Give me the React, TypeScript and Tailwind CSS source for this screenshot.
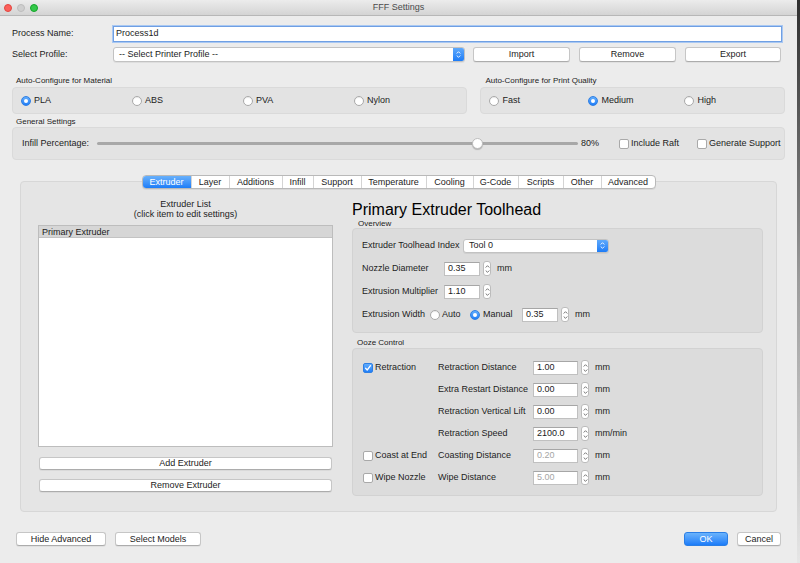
import React from "react";

const Radio = ({ checked }: { checked?: boolean }) =>
  checked ? (
    <span className="flex h-[10px] w-[10px] shrink-0 items-center justify-center rounded-full border border-[#2f7fe3] bg-linear-to-b from-[#62adfc] to-[#1e7ef8]">
      <span className="h-[4px] w-[4px] rounded-full bg-white" />
    </span>
  ) : (
    <span className="h-[10px] w-[10px] shrink-0 rounded-full border border-[#a9a9a9] bg-white shadow-[inset_0_1px_1px_rgba(0,0,0,0.08)]" />
  );

const Check = ({ checked }: { checked?: boolean }) =>
  checked ? (
    <span className="flex h-[10px] w-[10px] shrink-0 items-center justify-center rounded-[2px] border border-[#2f7fe3] bg-linear-to-b from-[#62adfc] to-[#1e7ef8]">
      <svg width="8" height="8" viewBox="0 0 8 8">
        <path d="M1.6 4.3 L3.2 6 L6.5 1.7" stroke="white" strokeWidth="1.3" fill="none" strokeLinecap="round" strokeLinejoin="round" />
      </svg>
    </span>
  ) : (
    <span className="h-[10px] w-[10px] shrink-0 rounded-[2px] border border-[#a9a9a9] bg-white" />
  );

const Chevrons = ({ color, size = 4 }: { color: string; size?: number }) => (
  <>
    <svg width={size + 1} height="3" viewBox="0 0 5 3">
      <path d="M0.7 2.5 L2.5 0.7 L4.3 2.5" stroke={color} strokeWidth="0.9" fill="none" />
    </svg>
    <svg width={size + 1} height="3" viewBox="0 0 5 3">
      <path d="M0.7 0.5 L2.5 2.3 L4.3 0.5" stroke={color} strokeWidth="0.9" fill="none" />
    </svg>
  </>
);

const Stepper = ({ className = "" }: { className?: string }) => (
  <span className={`flex h-[15px] w-[8px] shrink-0 flex-col items-center justify-center gap-[2px] rounded-[3px] border border-[#bcbcbc] bg-white ${className}`}>
    <Chevrons color="#666" />
  </span>
);

const Select = ({ label, className = "" }: { label: string; className?: string }) => (
  <div className={`flex items-center overflow-hidden rounded-[3px] border border-[#c2c2c2] bg-white shadow-[0_1px_0_rgba(0,0,0,0.06)] ${className}`}>
    <span className="flex-1 pl-[5px]">{label}</span>
    <span className="flex h-full w-[11px] flex-col items-center justify-center gap-[1px] bg-linear-to-b from-[#5ea9fb] to-[#1c7cf7]">
      <Chevrons color="white" />
    </span>
  </div>
);

const Button = ({ label, className = "" }: { label: string; className?: string }) => (
  <div className={`flex shrink-0 items-center justify-center rounded-[3px] border border-[#c6c6c6] border-b-[#acacac] bg-white leading-none shadow-[0_1px_0_rgba(0,0,0,0.05)] ${className}`}>
    {label}
  </div>
);

const Field = ({ value, className = "", disabled }: { value: string; className?: string; disabled?: boolean }) => (
  <div className={`flex h-[14px] shrink-0 items-center border border-[#c0c0c0] border-t-[#a6a6a6] bg-white pl-[3px] ${disabled ? "text-[#a5a5a5]" : ""} ${className}`}>
    {value}
  </div>
);

const tabs: [string, string][] = [
  ["Extruder", "w-[48px]"],
  ["Layer", "w-[38px]"],
  ["Additions", "w-[53px]"],
  ["Infill", "w-[31px]"],
  ["Support", "w-[48px]"],
  ["Temperature", "w-[65px]"],
  ["Cooling", "w-[47px]"],
  ["G-Code", "w-[45px]"],
  ["Scripts", "w-[45px]"],
  ["Other", "w-[38px]"],
  ["Advanced", "w-[54px]"],
];

const ooze: { check?: [string, boolean]; label: string; value: string; unit: string; disabled?: boolean }[] = [
  { check: ["Retraction", true], label: "Retraction Distance", value: "1.00", unit: "mm" },
  { label: "Extra Restart Distance", value: "0.00", unit: "mm" },
  { label: "Retraction Vertical Lift", value: "0.00", unit: "mm" },
  { label: "Retraction Speed", value: "2100.0", unit: "mm/min" },
  { check: ["Coast at End", false], label: "Coasting Distance", value: "0.20", unit: "mm", disabled: true },
  { check: ["Wipe Nozzle", false], label: "Wipe Distance", value: "5.00", unit: "mm", disabled: true },
];

export default function App() {
  return (
    <div className="flex h-[563px] w-[800px] overflow-hidden bg-[#ececec] font-['Liberation_Sans',Arial,sans-serif] text-[9px] text-[#1c1c1c]">
      <div className="flex w-[797px] shrink-0 flex-col">
        {/* title bar */}
        <div className="grid h-[16px] shrink-0 grid-cols-[1fr_auto_1fr] items-center border-b border-[#b7b7b7] bg-linear-to-b from-[#ececec] to-[#d4d4d4]">
          <div className="flex gap-[5px] pl-[4px]">
            <span className="h-[8px] w-[8px] rounded-full border border-[#e2463f] bg-[#fc605b]" />
            <span className="h-[8px] w-[8px] rounded-full border border-[#bdbdbd] bg-[#cfcfcf]" />
            <span className="h-[8px] w-[8px] rounded-full border border-[#14a42a] bg-[#34c84a]" />
          </div>
          <span className="text-[#4b4b4b]">FFF Settings</span>
          <span />
        </div>

        {/* process name */}
        <div className="mt-[10px] flex h-[16px] items-center px-[12px]">
          <span className="w-[101px]">Process Name:</span>
          <div className="flex h-[16px] w-[669px] items-center border border-[#6f9fe3] bg-white pl-[2px] shadow-[0_0_0_1px_#a9c8f2]">
            Process1d
          </div>
        </div>

        {/* profile */}
        <div className="mt-[5px] flex h-[15px] items-center px-[12px]">
          <span className="w-[101px]">Select Profile:</span>
          <Select label="-- Select Printer Profile --" className="h-[15px] w-[352px]" />
          <Button label="Import" className="ml-[8px] h-[15px] w-[97px]" />
          <Button label="Remove" className="ml-[9px] h-[15px] w-[97px]" />
          <Button label="Export" className="ml-[9px] h-[15px] w-[96px]" />
        </div>

        {/* auto configure */}
        <div className="mt-[13px] flex gap-[13px] px-[12px]">
          <div className="flex w-[456px] flex-col">
            <div className="h-[12px] pl-[4px] text-[8px] leading-[12px]">Auto-Configure for Material</div>
            <div className="flex h-[27px] items-center rounded-[4px] border border-[#dadada] bg-[#e3e3e3] pl-[8px]">
              {["PLA", "ABS", "PVA", "Nylon"].map((m, i) => (
                <div key={m} className="flex w-[111px] items-center gap-[3px]">
                  <Radio checked={i === 0} />
                  <span>{m}</span>
                </div>
              ))}
            </div>
          </div>
          <div className="flex w-[305px] flex-col">
            <div className="h-[12px] pl-[5px] text-[8px] leading-[12px]">Auto-Configure for Print Quality</div>
            <div className="flex h-[27px] items-center rounded-[4px] border border-[#dadada] bg-[#e3e3e3] pl-[8px]">
              <div className="flex w-[99px] items-center gap-[3px]">
                <Radio />
                <span>Fast</span>
              </div>
              <div className="flex w-[96px] items-center gap-[3px]">
                <Radio checked />
                <span>Medium</span>
              </div>
              <div className="flex items-center gap-[3px]">
                <Radio />
                <span>High</span>
              </div>
            </div>
          </div>
        </div>

        {/* general */}
        <div className="mt-[3px] px-[12px]">
          <div className="h-[10px] pl-[4px] text-[8px] leading-[10px]">General Settings</div>
          <div className="flex h-[33px] items-center rounded-[4px] border border-[#dadada] bg-[#e3e3e3] pl-[9px]">
            <span className="w-[75px]">Infill Percentage:</span>
            <div className="relative flex h-[12px] w-[481px] items-center">
              <div className="h-[3px] w-full rounded-full bg-[#a8a8a8]" />
              <span className="absolute left-[375px] top-[0.5px] h-[11px] w-[11px] rounded-full border border-[#bdbdbd] bg-white shadow-[0_1px_1px_rgba(0,0,0,0.2)]" />
            </div>
            <span className="ml-[3px] w-[38px]">80%</span>
            <div className="flex w-[78px] items-center gap-[2px]">
              <Check />
              <span>Include Raft</span>
            </div>
            <div className="flex items-center gap-[2px]">
              <Check />
              <span>Generate Support</span>
            </div>
          </div>
        </div>

        {/* tab view */}
        <div className="mt-[15px] flex flex-col px-[20px]">
          <div className="relative z-10 mb-[-8px] flex h-[14px] justify-center">
            <div className="flex overflow-hidden rounded-[4px] border border-[#b9b9b9] bg-white shadow-[0_1px_0_rgba(0,0,0,0.06)]">
              {tabs.map(([t, w], i) => (
                <div
                  key={t}
                  className={`flex items-center justify-center leading-none ${w} ${
                    i === 0
                      ? "bg-linear-to-b from-[#67b0fb] to-[#1b7df8] text-white"
                      : "border-l border-[#d4d4d4]"
                  }`}
                >
                  {t}
                </div>
              ))}
            </div>
          </div>
          <div className="flex h-[331px] gap-[19px] rounded-[4px] border border-[#d7d7d7] bg-[#e5e5e5] pl-[17px]">
            {/* extruder list */}
            <div className="flex w-[295px] flex-col pt-[17px]">
              <div className="text-center leading-[10px]">
                Extruder List
                <br />
                (click item to edit settings)
              </div>
              <div className="mt-[6px] h-[222px] border border-[#bdbdbd] bg-white">
                <div className="h-[12px] border-b border-[#c3c3c3] bg-[#d6d6d6] pl-[3px] leading-[12px]">Primary Extruder</div>
              </div>
              <Button label="Add Extruder" className="mx-[1px] mt-[10px] h-[13px]" />
              <Button label="Remove Extruder" className="mx-[1px] mt-[9px] h-[13px]" />
            </div>

            {/* extruder settings */}
            <div className="flex w-[411px] flex-col pt-[19px]">
              <div className="h-[18px] text-[16px] leading-[18px] text-black">Primary Extruder Toolhead</div>
              <div className="h-[9px] pl-[6px] text-[8px] leading-[9px]">Overview</div>
              <div className="flex h-[105px] flex-col gap-[8px] rounded-[4px] border border-[#d2d2d2] bg-[#dcdcdc] pl-[9px] pt-[9px]">
                <div className="flex h-[15px] items-center">
                  <span className="w-[101px]">Extruder Toolhead Index</span>
                  <Select label="Tool 0" className="h-[14px] w-[146px]" />
                </div>
                <div className="flex h-[15px] items-center">
                  <span className="w-[82px]">Nozzle Diameter</span>
                  <Field value="0.35" className="w-[36px]" />
                  <Stepper className="ml-[3px]" />
                  <span className="ml-[6px]">mm</span>
                </div>
                <div className="flex h-[15px] items-center">
                  <span className="w-[82px]">Extrusion Multiplier</span>
                  <Field value="1.10" className="w-[36px]" />
                  <Stepper className="ml-[3px]" />
                </div>
                <div className="flex h-[15px] items-center">
                  <span className="w-[68px]">Extrusion Width</span>
                  <div className="flex w-[40px] items-center gap-[2px]">
                    <Radio />
                    <span>Auto</span>
                  </div>
                  <div className="flex w-[52px] items-center gap-[3px]">
                    <Radio checked />
                    <span>Manual</span>
                  </div>
                  <Field value="0.35" className="w-[36px]" />
                  <Stepper className="ml-[3px]" />
                  <span className="ml-[6px]">mm</span>
                </div>
              </div>

              <div className="mt-[5px] h-[10px] pl-[5px] text-[8px] leading-[10px]">Ooze Control</div>
              <div className="flex h-[148px] flex-col gap-[7px] rounded-[4px] border border-[#d2d2d2] bg-[#dcdcdc] pl-[10px] pt-[11px]">
                {ooze.map((r) => (
                  <div key={r.label} className="flex h-[15px] items-center">
                    <div className="flex w-[75px] items-center gap-[2px]">
                      {r.check && (
                        <>
                          <Check checked={r.check[1]} />
                          <span>{r.check[0]}</span>
                        </>
                      )}
                    </div>
                    <span className="w-[95px]">{r.label}</span>
                    <Field value={r.value} className="w-[45px]" disabled={r.disabled} />
                    <Stepper className="ml-[3px]" />
                    <span className="ml-[6px]">{r.unit}</span>
                  </div>
                ))}
              </div>
            </div>
          </div>
        </div>

        {/* footer */}
        <div className="mt-[20px] flex h-[14px] items-center px-[16px]">
          <Button label="Hide Advanced" className="h-[14px] w-[90px]" />
          <Button label="Select Models" className="ml-[9px] h-[14px] w-[86px]" />
          <div className="flex-1" />
          <div className="flex h-[14px] w-[44px] items-center justify-center rounded-[3px] border border-[#2a7ee6] bg-linear-to-b from-[#6ab3fc] to-[#1a7cf8] leading-none text-white">
            OK
          </div>
          <Button label="Cancel" className="ml-[9px] h-[14px] w-[44px]" />
        </div>
      </div>
      <div className="w-[3px] shrink-0 bg-linear-to-b from-[#2f2f2f] via-[#9c9c9c] to-[#e6e6e6]" />
    </div>
  );
}
